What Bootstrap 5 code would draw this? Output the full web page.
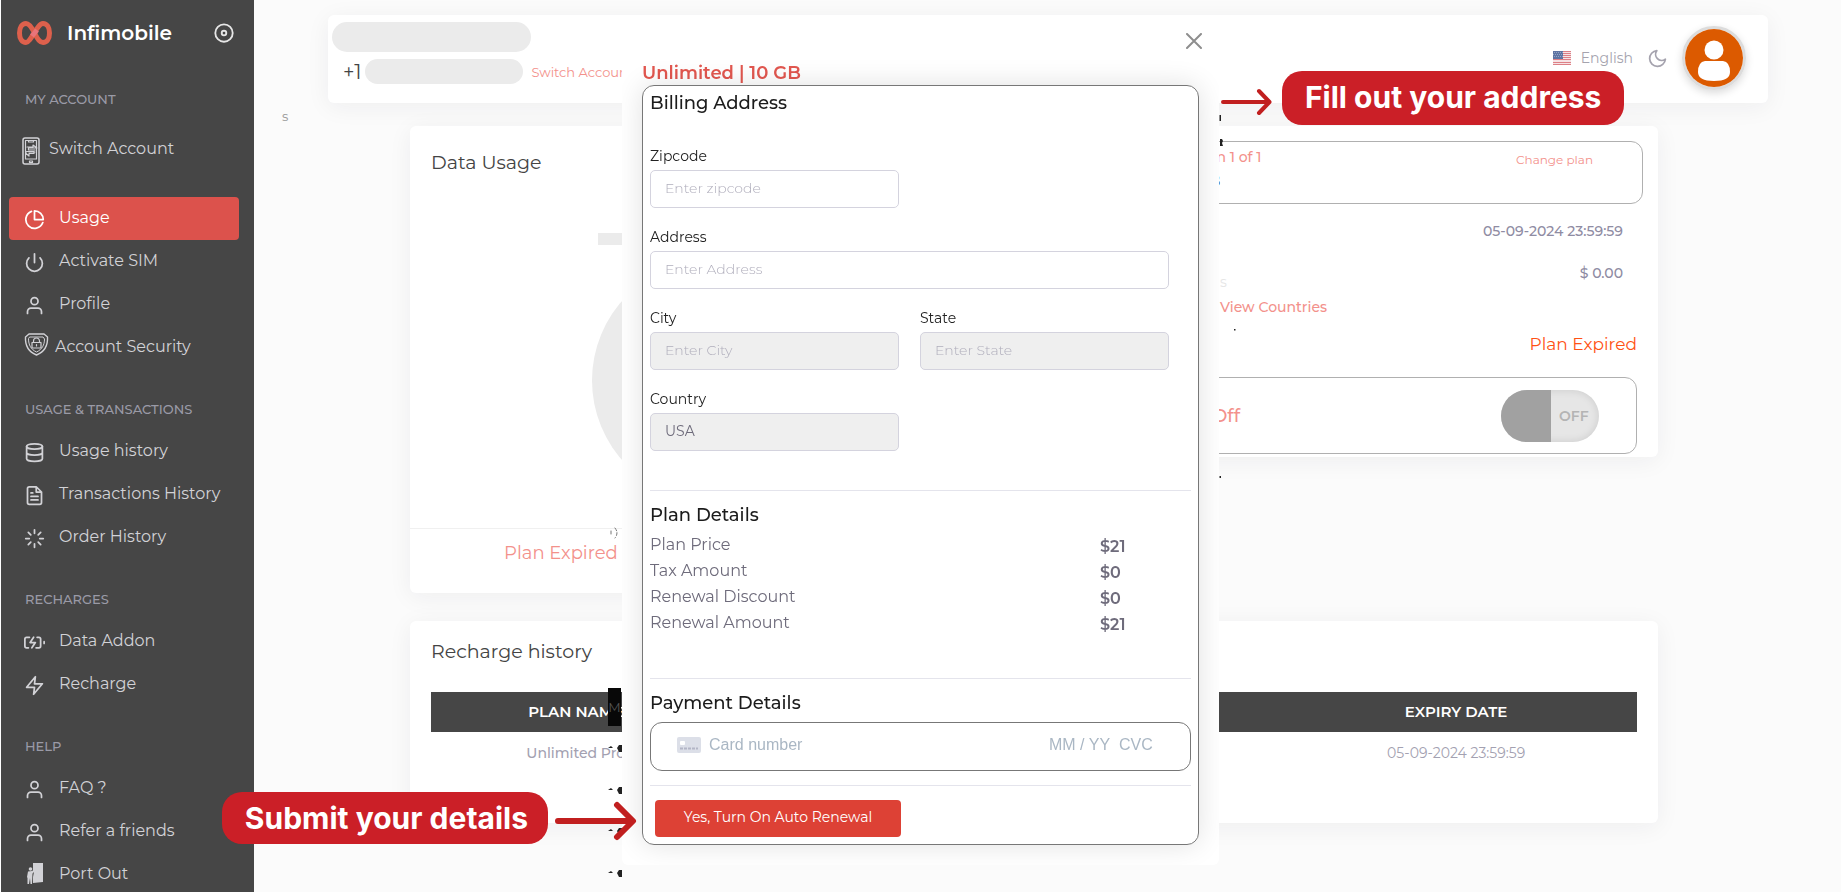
<!DOCTYPE html>
<html lang="en">
<head>
<meta charset="utf-8">
<meta name="viewport" content="width=device-width, initial-scale=1">
<title>Infimobile</title>
<link href="https://cdn.jsdelivr.net/npm/bootstrap@5.3.0/dist/css/bootstrap.min.css" rel="stylesheet">
<style>
  body { background: #fbfbfb; font-family: Montserrat, Inter, "Noto Sans", sans-serif; font-size: 14px; color: #444; line-height: 20px; }
  a { text-decoration: none; }
  .ico { fill: none; stroke: currentColor; stroke-width: 2; stroke-linecap: round; stroke-linejoin: round; flex: none; }

  /* sidebar */
  .side { width: 254px; background: #464646; border-left: 1px solid #fff; flex: none; }
  .brand-bar { height: 66px; padding-left: 16px; padding-right: 19px; }
  .brand-name { font-size: 20px; font-weight: 600; color: #fff; margin-left: 15px; }
  .side-head { height: 42px; line-height: 42px; margin: 19px 0 0; padding-left: 24px; font-size: 13px; font-weight: 500; color: #9a9aa6; }
  .side-first { margin-top: 12px; }
  .side-link { height: 43px; margin: 0 15px 0 8px; padding: 0 0 2px 15px; border-radius: 4px; font-size: 16px; color: #d2d2d6; }
  .side-link span { margin-left: 14px; }
  .side-link .ico { margin-top: 4px; }
  .side-link.tight span { margin-left: 6px; }
  .side-link.acct { height: 57px; margin-bottom: 20px; padding: 0 0 0 12px; }
  .side-link.acct span { margin-left: 8px; }
  .side-link.on { background: #dc524c; color: #fff; }

  /* page panels */
  .panel { background: #fff; border-radius: 6px; box-shadow: 0 4px 24px rgba(34,41,47,.06); }
  .page { padding: 15px 73px 0 74px; }
  .topbar { height: 88px; padding: 7px 22px 0 4px; }
  .blank { background: #ebebeb; border-radius: 20px; }
  .blank-a { width: 199px; height: 30px; margin-bottom: 7px; }
  .blank-b { width: 158px; height: 25px; }
  .prefix { font-size: 20px; margin-left: 11px; }
  .soft-link { color: #f3918b; font-size: 13px; }
  .lang { color: #a5a3ae; font-size: 14px; margin: 0 14px 0 10px; }
  .moon { color: #a5a3ae; margin-right: 14px; }
  .avatar-ring { width: 64px; height: 64px; border: 3px solid #dcdcdc; border-radius: 50%; box-shadow: 0 3px 8px rgba(0,0,0,.15); }
  .crumb { height: 23px; margin-left: -46px; padding-top: 3px; color: #999; font-size: 13px; }
  .decks { margin: 0 110px 0 82px; }
  .duo { display: grid; grid-template-columns: 605fr 615fr; gap: 28px; align-items: start; margin-bottom: 28px; }
  .panel-title { font-size: 19px; line-height: 24px; font-weight: 400; color: #444; margin: 0; }
  .usage { height: 467px; }
  .chart-area { height: 403px; padding: 25px 21px 0; border-bottom: 1px solid #f0f0f0; }
  .legend-key { width: 42px; height: 12px; background: #ebebeb; margin: 58px 0 15px 167px; }
  .donut { width: 241px; height: 241px; border-radius: 50%; background: #ebebeb; margin: 0 auto; }
  .expired-soft { padding: 12px 0 0 94px; font-size: 18px; line-height: 24px; color: #f3918b; }
  .plan { padding: 15px 15px 3px 20px; }
  .outlined { border: 1px solid #b0b0b0; border-radius: 12px; }
  .plan-box { height: 63px; padding: 5px 49px 0 130px; }
  .plan-box .count { color: #f3918b; font-weight: 500; }
  .plan-box .quota { margin: 4px 0 0 -13px; color: #333; }
  .plan-box .soft-link { font-size: 12px; margin-top: 3px; }
  .plan-line { margin-top: 17px; padding-right: 20px; text-align: right; color: #8f8ca3; font-weight: 500; }
  .plan-cost { margin-top: 22px; height: 29px; padding: 0 20px 0 157px; color: #8f8ca3; font-weight: 500; }
  .ghost { color: #e6e6e6; font-weight: 400; padding-top: 9px; }
  .countries { margin-top: 5px; padding-left: 157px; }
  .countries a { font-size: 14px; font-weight: 500; }
  .expired-now { margin: 17px 6px 0 0; text-align: right; font-size: 17px; color: #ff5214; }
  .plan-off { height: 77px; margin: 23px 6px 0 0; padding: 0 37px 0 16px; }
  .off-word { color: #f3918b; font-size: 18px; font-weight: 500; }
  .switch { width: 98px; height: 52px; border-radius: 26px; border: 0; padding: 0; overflow: hidden; background: #e6e6e6; color: #b4b4b4; font-weight: 600; font-size: 14px; box-shadow: inset 0 0 8px rgba(0,0,0,.12); }
  .switch .knob { width: 50px; height: 52px; background: #a1a1a1; }
  .history { height: 202px; padding: 19px 21px 0; }
  .history table { margin-top: 28px; width: 100%; table-layout: fixed; text-align: center; }
  .history th { background: #464646; color: #fff; height: 40px; font-size: 15px; font-weight: 600; }
  .history td { color: #a3a1b1; height: 42px; font-size: 14px; }
  .col-plan { width: 24%; }
  .col-expiry { width: 30%; }

  /* dialog */
  .pay-dialog { position: relative; width: 597px; max-width: none; margin: 22px auto 0; }
  .pay-sheet { border: 0; border-radius: 6px; background: #fff; height: 843px; padding: 0 20px; overflow: hidden; }
  .pay-head { height: 63px; }
  .pay-head .btn-x { border: 0; background: none; padding: 0; position: absolute; right: 17px; top: 11px; color: #8e8e8e; line-height: 0; }
  .plan-name { font-size: 18px; line-height: 24px; font-weight: 600; color: #e2574f; margin: 0; padding-top: 39px; }
  .form-box { border: 1px solid #777; border-radius: 12px; padding: 5px 7px 7px; box-shadow: 0 0 28px rgba(0,0,0,.12); }
  .form-box h2 { font-size: 18px; line-height: 24px; font-weight: 500; color: #1c1c1c; margin: 0; }
  .form-box .rule + h2 { margin-top: 12px; }
  .fields { display: grid; grid-template-columns: 249px 249px; column-gap: 21px; row-gap: 19px; margin-top: 31px; }
  .fields label { display: block; font-size: 14px; line-height: 20px; color: #222; margin-bottom: 4px; }
  .fields .form-control { height: 38px; font-size: 14px; padding: 5px 14px 7px; border: 1px solid #d4d3de; border-radius: 5px; color: #6e6b7b; background: #fff; }
  .fields .form-control:disabled { background: #efefef; }
  .fields .form-control::placeholder { color: #b0aebc; font-weight: 300; }
  .wide { grid-column: 1 / 3; }
  .rule { border: 0; border-top: 1px solid #e4e4ec; opacity: 1; margin: 14px 0 0; }
  .rule-plan { margin-top: 39px; }
  .rule-pay { margin-top: 42px; }
  .prices { width: 100%; margin-top: 5px; color: #6e6b7b; font-size: 16px; }
  .prices th { font-weight: 400; padding: 0; }
  .prices td { width: 91px; font-weight: 600; padding: 4px 0 0; }
  .prices tr { height: 26px; }
  .cardline { height: 49px; margin-top: 7px; border: 1px solid #777; border-radius: 12px; padding: 0 27px 4px 26px; }
  .cardline input { border: 0; outline: 0; padding: 0; background: none; font: 16px "Liberation Sans", Arial, sans-serif; }
  .cardline input::placeholder { color: #aab7c4; opacity: 1; }
  .card-exp { width: 70px; }
  .card-cvc { width: 44px; }
  .btn-renew { width: 246px; height: 37px; padding: 0 0 2px; margin: 14px 0 0 5px; background: #dd4135; border: 0; border-radius: 4px; color: #fff; font-size: 14px; }

  /* callouts lying over the page */
  .callout { position: absolute; display: flex; align-items: center; white-space: nowrap; }
  .callout b { background: #cb1f27; color: #fff; font: 700 30px/36px Inter, sans-serif; border-radius: 20px; }
  .callout-a { left: 100%; top: 49px; margin-left: 2px; gap: 10px; }
  .callout-a b { padding: 8px 23px 10px; }
  .callout-b { right: 100%; bottom: 21px; margin-right: -15px; gap: 6px; }
  .callout-b b { padding: 8px 20px 8px 23px; }
  .callout svg, .specks { fill: none; stroke: #c11f1f; stroke-linecap: round; stroke-linejoin: round; flex: none; }
  .specks { position: absolute; fill: #222; stroke: none; }
  .specks-l { right: 100%; top: 500px; margin-right: -2px; }
  .specks-r { left: 100%; top: 90px; }
  .scrap { position: absolute; right: 100%; top: 666px; width: 13px; height: 38px; margin-right: 1px; padding-top: 9px; background: #080808; color: #555; text-align: center; font-size: 13px; line-height: 20px; }
</style>
</head>
<body>
<div class="d-flex vh-100 overflow-hidden">

  <nav class="side">
    <div class="brand-bar d-flex align-items-center">
      <svg width="35" height="24" viewBox="0 0 35 24" fill="none" stroke="#dd604c" stroke-width="5"><path d="M17.500 12C14 5 11.500 2.500 9 2.500C5 2.500 2.500 6.500 2.500 12S5 21.500 9 21.500C14 21.500 20 2.500 26 2.500C30 2.500 32.500 6.500 32.500 12S30 21.500 26 21.500C23 21.500 21 19 17.500 12Z"/><path d="M15 15L20 9" stroke="#e8747a"/></svg>
      <span class="brand-name">Infimobile</span>
      <svg class="ico ms-auto" width="22" height="22" viewBox="0 0 24 24" color="#e6e6e6"><circle cx="12" cy="12" r="9.500"/><circle cx="12" cy="12" r="2.500"/></svg>
    </div>
    <h6 class="side-head side-first">MY ACCOUNT</h6>
    <a href="#" class="side-link acct d-flex align-items-center"><svg class="ico" width="20" height="28" viewBox="0 0 20 28" stroke-width="1"><rect x="2" y="1" width="16" height="26" rx="2" stroke-width="1.500"/><path d="M4.500 3.500H15.500V22H4.500ZM7.500 3.500V5H12.500V3.500M8.500 24H11.500V25.500H8.500ZM12 10V8L16 11H7.500V13H14M8 18.500V16.500H13V14.500H5.500L4.500 16L8 19M6 10H12M8 15H14" style="stroke-width:1.200"/></svg><span>Switch Account</span></a>
    <a href="#" class="side-link on d-flex align-items-center"><svg class="ico" width="21" height="21" viewBox="0 0 24 24"><path d="M8.500 2.700A10 10 0 1 0 21.500 15.500M12 2A10 10 0 0 1 22 12H12Z"/></svg><span>Usage</span></a>
    <a href="#" class="side-link d-flex align-items-center"><svg class="ico" width="21" height="21" viewBox="0 0 24 24"><path d="M18.360 6.640a9 9 0 1 1-12.730 0M12 2V12"/></svg><span>Activate SIM</span></a>
    <a href="#" class="side-link d-flex align-items-center"><svg class="ico" width="21" height="21" viewBox="0 0 24 24"><path d="M20 21v-2a4 4 0 0 0-4-4H8a4 4 0 0 0-4 4v2"/><circle cx="12" cy="7" r="4"/></svg><span>Profile</span></a>
    <a href="#" class="side-link tight d-flex align-items-center"><svg class="ico mt-0 mb-1" width="25" height="23" viewBox="0 0 25 23"><path d="M12.500 1H20L23.500 4C24 13 20 19 12.500 22C5 19 1 13 1.500 4L5 1Z" stroke-width="1.400"/><path d="M6 4H19L20.500 6C20.500 12 18 16.500 12.500 19C7 16.500 4.500 12 4.500 6Z" stroke-width="1"/><path d="M8 9.500H17V15H8ZM9.500 9.500V8A3 3 0 0 1 15.500 8V9.500M12.500 11.500V13" stroke-width="1.200"/></svg><span>Account Security</span></a>

    <h6 class="side-head">USAGE &amp; TRANSACTIONS</h6>
    <a href="#" class="side-link d-flex align-items-center"><svg class="ico" width="21" height="21" viewBox="0 0 24 24"><ellipse cx="12" cy="5" rx="9" ry="3"/><path d="M21 12c0 1.660-4 3-9 3s-9-1.340-9-3M3 5v14c0 1.660 4 3 9 3s9-1.340 9-3V5"/></svg><span>Usage history</span></a>
    <a href="#" class="side-link d-flex align-items-center"><svg class="ico" width="21" height="21" viewBox="0 0 24 24"><path d="M14 2H6a2 2 0 0 0-2 2v16a2 2 0 0 0 2 2h12a2 2 0 0 0 2-2V8ZM14 2V8H20M16 13H8M16 17H8M10 9H8"/></svg><span>Transactions History</span></a>
    <a href="#" class="side-link d-flex align-items-center"><svg class="ico" width="21" height="21" viewBox="0 0 24 24"><path d="M12 2V6M12 18V22M4.930 4.930L7.760 7.760M16.240 16.240L19.070 19.070M2 12H6M18 12H22M4.930 19.070L7.760 16.240M16.240 7.760L19.070 4.930"/></svg><span>Order History</span></a>

    <h6 class="side-head">RECHARGES</h6>
    <a href="#" class="side-link d-flex align-items-center"><svg class="ico" width="21" height="21" viewBox="0 0 24 24"><path d="M5 18H3a2 2 0 0 1-2-2V8a2 2 0 0 1 2-2H6.200M15 6H17a2 2 0 0 1 2 2V16a2 2 0 0 1-2 2H13.800M23 13V11M11 6L7 12H13L9 18"/></svg><span>Data Addon</span></a>
    <a href="#" class="side-link d-flex align-items-center"><svg class="ico" width="21" height="21" viewBox="0 0 24 24"><path d="M13 2L3 14H12L11 22L21 10H12Z"/></svg><span>Recharge</span></a>

    <h6 class="side-head">HELP</h6>
    <a href="#" class="side-link d-flex align-items-center"><svg class="ico" width="21" height="21" viewBox="0 0 24 24"><path d="M20 21v-2a4 4 0 0 0-4-4H8a4 4 0 0 0-4 4v2"/><circle cx="12" cy="7" r="4"/></svg><span>FAQ ?</span></a>
    <a href="#" class="side-link d-flex align-items-center"><svg class="ico" width="21" height="21" viewBox="0 0 24 24"><path d="M20 21v-2a4 4 0 0 0-4-4H8a4 4 0 0 0-4 4v2"/><circle cx="12" cy="7" r="4"/></svg><span>Refer a friends</span></a>
    <a href="#" class="side-link d-flex align-items-center"><svg class="mt-0" width="21" height="21" viewBox="0 0 21 21" fill="currentColor"><path d="M9 0H19V19L9 20V14L10 9L9 8Z"/><circle cx="6.500" cy="6" r="1.800"/><path d="M4 8.500L8 8L11 6V8L8.500 10.500L8 21H6.500L6 15L5 21H3.500V15L3 14Z"/></svg><span>Port Out</span></a>
  </nav>

  <main class="page flex-grow-1">
    <header class="panel topbar d-flex justify-content-between">
      <div>
        <div class="blank blank-a"></div>
        <div class="d-flex align-items-center">
          <span class="prefix">+1</span><span class="blank blank-b ms-1 me-1"></span>
          <a href="#" class="soft-link ms-1">Switch Account</a>
        </div>
      </div>
      <div class="d-flex align-items-center align-self-start pt-1">
        <svg width="18" height="14" viewBox="0 0 18 14"><path fill="#f6e3e5" d="M0 0H18V14H0Z"/><path stroke="#dd8086" d="M0 .5H18M0 2.500H18M0 4.500H18M0 6.500H18M0 8.500H18M0 11.500H18M0 13.500H18"/><path fill="#5d74a3" d="M0 0H10V8H0Z"/><path stroke="#93a3c3" stroke-dasharray="1 1" d="M1 1.500H10M0 3.500H10M1 5.500H10"/></svg>
        <a href="#" class="lang">English</a>
        <svg class="ico moon" width="21" height="21" viewBox="0 0 24 24"><path d="M21 12.790A9 9 0 1 1 11.210 3A7 7 0 0 0 21 12.790Z"/></svg>
        <span class="avatar-ring"><svg width="58" height="58" viewBox="0 0 58 58" class="d-block"><circle cx="29" cy="29" r="29" fill="#dc5a00"/><circle cx="29" cy="21" r="9.500" fill="#fff"/><path fill="#fff" d="M20 32H38Q45 33 45 43Q45 52 29 52T13 43Q13 33 20 32Z"/></svg></span>
      </div>
    </header>
    <div class="crumb">s</div>

    <div class="decks">
      <div class="duo">
        <section class="panel usage">
          <div class="chart-area">
            <h4 class="panel-title">Data Usage</h4>
            <div class="legend-key"></div>
            <div class="donut"></div>
          </div>
          <div class="expired-soft">Plan Expired</div>
        </section>
        <section class="panel plan">
          <div class="outlined plan-box d-flex justify-content-between">
            <div><div class="count">Plan 1 of 1</div><div class="quota">10 GB</div></div>
            <a href="#" class="soft-link">Change plan</a>
          </div>
          <div class="plan-line">05-09-2024 23:59:59</div>
          <div class="plan-cost d-flex justify-content-between"><span class="ghost">s</span><span>$ 0.00</span></div>
          <div class="countries"><a href="#" class="soft-link">View Countries</a></div>
          <div class="expired-now">Plan Expired</div>
          <div class="outlined plan-off d-flex align-items-center justify-content-between">
            <span class="off-word">Auto Renewal Off</span>
            <button type="button" class="switch d-flex align-items-center" role="switch" aria-checked="false"><span class="knob"></span><span class="ms-2">OFF</span></button>
          </div>
        </section>
      </div>
      <section class="panel history">
        <h4 class="panel-title">Recharge history</h4>
        <table>
          <thead><tr><th class="col-plan">PLAN NAME</th><th></th><th></th><th class="col-expiry">EXPIRY DATE</th></tr></thead>
          <tbody><tr><td class="fw-medium">Unlimited Pro</td><td></td><td></td><td>05-09-2024 23:59:59</td></tr></tbody>
        </table>
      </section>
    </div>
  </main>
</div>

<div class="modal d-block overflow-hidden" role="dialog" aria-labelledby="planName">
  <div class="modal-dialog pay-dialog">
    <div class="modal-content pay-sheet">
      <div class="pay-head">
        <h1 class="plan-name" id="planName">Unlimited | 10 GB</h1>
        <button type="button" class="btn-x" aria-label="Close"><svg class="ico" width="16" height="16" viewBox="0 0 16 16"><path d="M1 1L15 15M15 1L1 15"/></svg></button>
      </div>
      <form class="form-box">
        <h2>Billing Address</h2>
        <div class="fields">
          <div><label for="zip">Zipcode</label><input id="zip" class="form-control" placeholder="Enter zipcode"></div>
          <div class="wide"><label for="addr">Address</label><input id="addr" class="form-control" placeholder="Enter Address"></div>
          <div><label for="city">City</label><input id="city" class="form-control" placeholder="Enter City" disabled></div>
          <div><label for="state">State</label><input id="state" class="form-control" placeholder="Enter State" disabled></div>
          <div><label for="country">Country</label><input id="country" class="form-control" value="USA" disabled></div>
        </div>
        <hr class="rule rule-plan">
        <h2>Plan Details</h2>
        <table class="prices">
          <tr><th>Plan Price</th><td>$21</td></tr>
          <tr><th>Tax Amount</th><td>$0</td></tr>
          <tr><th>Renewal Discount</th><td>$0</td></tr>
          <tr><th>Renewal Amount</th><td>$21</td></tr>
        </table>
        <hr class="rule rule-pay">
        <h2>Payment Details</h2>
        <div class="cardline d-flex align-items-center">
          <svg width="24" height="16" viewBox="0 0 24 16"><rect width="24" height="16" rx="2" fill="#dcdfe8"/><rect x="3" y="4" width="5" height="4" rx="1" fill="#fff"/><path stroke="#b3b6c6" stroke-width="2" stroke-dasharray="3 1" d="M3 11.500H21"/></svg>
          <input class="flex-grow-1 ms-2" aria-label="Card number" placeholder="Card number">
          <input class="card-exp" aria-label="Expiry date" placeholder="MM / YY">
          <input class="card-cvc" aria-label="CVC" placeholder="CVC">
        </div>
        <hr class="rule">
        <button type="button" class="btn btn-renew">Yes, Turn On Auto Renewal</button>
      </form>
    </div>
    <div class="scrap">M</div>
    <svg class="specks specks-l" width="16" height="370" viewBox="608 522 16 370"><path fill="none" stroke="#777" stroke-dasharray="3 2" d="M615 528Q619 533 615 538M611 531V534"/><g id="sp"><path d="M608 748L611 746L613 748Z"/><path d="M617 748L619 745H622V752H619Z"/></g><use href="#sp" y="42"/><use href="#sp" y="83"/><use href="#sp" y="125"/></svg>
    <svg class="specks specks-r" width="20" height="370" viewBox="1218 112 20 370"><path d="M1218.500 115H1220V121H1218.500ZM1219 139H1221L1222 141L1221 143L1222 146H1219ZM1233 329H1234.500V330.500H1233ZM1218.500 476H1220V478H1218.500Z"/></svg>
    <div class="callout callout-a"><svg width="51" height="34" viewBox="0 0 51 34" stroke-width="4"><path d="M2 21H48M38 10L48.500 21L38 32"/></svg><b>Fill out your address</b></div>
    <div class="callout callout-b"><b>Submit your details</b><svg width="83" height="46" viewBox="0 0 83 46" stroke-width="6"><path d="M4 26H77M63 10L79 26L63 42"/></svg></div>
  </div>
</div>
<script src="https://cdn.jsdelivr.net/npm/bootstrap@5.3.0/dist/js/bootstrap.bundle.min.js"></script>
</body>
</html>
